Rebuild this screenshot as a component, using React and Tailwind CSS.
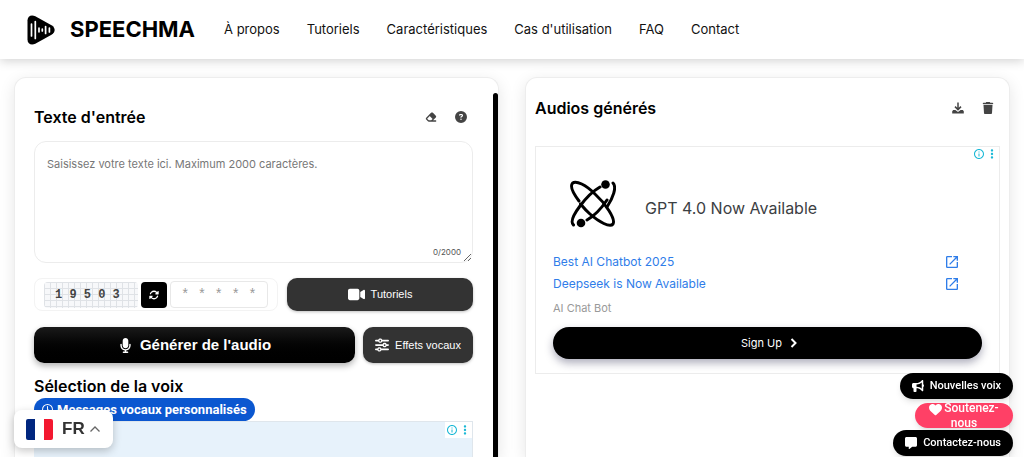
import React from "react";
import {
  FaEraser,
  FaCircleQuestion,
  FaRotate,
  FaVideo,
  FaMicrophone,
  FaSliders,
  FaBullhorn,
  FaHeart,
  FaMessage,
  FaTrash,
  FaRegClock,
} from "react-icons/fa6";
import { MdOpenInNew, MdInfoOutline, MdMoreVert } from "react-icons/md";

const navItems = ["À propos", "Tutoriels", "Caractéristiques", "Cas d'utilisation", "FAQ", "Contact"];

function Logo() {
  return (
    <svg viewBox="0 0 28 30" className="h-[30px] w-7" aria-hidden="true">
      <path
        d="M0.5 5.5C0.5 1 4.5-0.7 8.3 1.3L24.5 10.3C28.7 12.7 28.7 17.3 24.5 19.7L8.3 28.7C4.500 30.700 0.500 29 0.500 24.500Z"
        fill="#000"
      />
      <g stroke="#fff" strokeWidth="1.7" strokeLinecap="round">
        <path d="M4.5 9v12M8.3 6.5v17M12 13.2v3.6M15.3 14v2M18.6 11.5v7M22.4 13v4" />
      </g>
    </svg>
  );
}

function DownloadIcon() {
  return (
    <svg viewBox="0 0 12 12" className="size-3" aria-hidden="true">
      <path d="M6 0.5v6.8M3 4.6l3 3 3-3" fill="none" stroke="currentColor" strokeWidth="1.5" />
      <path d="M1.2 8h2.2L6 10l2.6-2h2.2l1 1.2v2.3H0.2V9.2Z" fill="currentColor" />
    </svg>
  );
}

function AtomIcon() {
  return (
    <svg viewBox="0 0 46 48" className="h-12 w-[46px]" fill="none" stroke="#000" strokeWidth="3" strokeLinecap="round" aria-hidden="true">
      <path d="M9 21C3 13 0 6 2.500 3.200C6 0 16 5 25 14C35 23 46 39 43 44C40 48 29 42 20 34C16 30.500 13 27 10.500 24" />
      <path d="M37 27C43 18 47 7 43 3M30 7C23 11 16 18 10 26C4 34 0 42 3.500 45M17 40C24 36 31 29 37 20" />
      <circle cx="35.500" cy="4.500" r="4.300" fill="#000" stroke="none" />
      <circle cx="11" cy="43" r="4.300" fill="#000" stroke="none" />
    </svg>
  );
}

function AdChoices({ className }) {
  return (
    <div className={"absolute top-0 right-0 flex items-center text-[#18b8d6] " + className}>
      <MdInfoOutline className="size-3" />
      <MdMoreVert className="size-[14px]" />
    </div>
  );
}

function InputPanel() {
  return (
    <section className="flex min-w-0 overflow-hidden rounded-t-xl border border-b-0 border-[#ededed] bg-white shadow-[0_4px_16px_rgba(0,0,0,0.1)]">
      <div className="min-w-0 flex-1 pt-[27px] pr-5 pl-[19px]">
        <div className="flex h-6 items-center justify-between pr-[6px]">
          <h2 className="text-[16px] font-semibold">Texte d'entrée</h2>
          <div className="flex gap-[18px] text-[#444]">
            <button type="button" aria-label="Effacer"><FaEraser className="size-3" /></button>
            <button type="button" aria-label="Aide"><FaCircleQuestion className="size-3" /></button>
          </div>
        </div>
        <div className="relative mt-3 flex">
          <textarea
            aria-label="Texte d'entrée"
            placeholder="Saisissez votre texte ici. Maximum 2000 caractères."
            className="h-[122px] w-full resize-y rounded-xl border border-[#ececec] px-3 py-3 text-[11px] leading-5 placeholder:text-[#777]"
          />
          <span className="absolute right-3 bottom-1 text-[8px] leading-[14px] text-[#555]">0/2000</span>
        </div>
        <div className="mt-[15px] flex gap-[9px]">
          <div className="flex h-[33px] w-[244px] items-center gap-[3px] rounded-lg border border-[#f3f3f3] px-[9px]">
            <div className="flex h-[26px] w-[94px] items-center rounded-sm bg-[#f7f8fa] bg-[linear-gradient(#dfe2e6_1px,transparent_1px),linear-gradient(90deg,#dfe2e6_1px,transparent_1px)] bg-[size:6px_6px] pl-[11px] font-['Liberation_Mono',monospace] text-[12px] font-bold text-[#444]">
              1 9 5 0 3
            </div>
            <button type="button" aria-label="Actualiser" className="flex size-[26px] items-center justify-center rounded bg-black text-white">
              <FaRotate className="size-[10px]" />
            </button>
            <input
              aria-label="Code de vérification"
              placeholder="* * * * *"
              className="h-[27px] w-0 min-w-0 flex-1 rounded border border-[#e8e8e8] px-[10px] font-['Liberation_Mono',monospace] text-[14px] placeholder:text-[#999]"
            />
          </div>
          <button type="button" className="flex h-[33px] flex-1 items-center justify-center gap-[6px] rounded-[10px] bg-[#333] font-['Liberation_Sans',sans-serif] text-[11px] text-white shadow-[0_1px_3px_rgba(0,0,0,0.25)]">
            <FaVideo className="size-[17px]" />
            Tutoriels
          </button>
        </div>
        <div className="mt-4 flex gap-2">
          <button type="button" className="flex h-9 flex-1 items-center justify-center gap-[7px] rounded-[10px] bg-linear-to-b from-[#1a1a1a] to-black font-['Liberation_Sans',sans-serif] text-[15px] font-bold text-white shadow-[0_3px_6px_rgba(0,0,0,0.3)]">
            <FaMicrophone className="size-[15px]" />
            Générer de l'audio
          </button>
          <button type="button" className="flex h-9 w-[110px] items-center justify-center gap-[6px] rounded-[10px] bg-[#333] font-['Liberation_Sans',sans-serif] text-[11px] text-white shadow-[0_1px_3px_rgba(0,0,0,0.25)]">
            <FaSliders className="size-[14px]" />
            Effets vocaux
          </button>
        </div>
        <h2 className="mt-[11px] text-[16px] leading-6 font-semibold">Sélection de la voix</h2>
        <a href="#voix" className="flex h-[23px] w-fit items-center gap-1 rounded-full bg-[#0b57d0] px-2 font-['Roboto',sans-serif] text-[13px] font-bold text-white">
          <FaRegClock className="size-[11px]" />
          Messages vocaux personnalisés
        </a>
        <div className="relative h-40 border-t border-r border-[#dfe6ec] bg-[#e7f2fb]">
          <AdChoices className="bg-white py-px pl-px" />
        </div>
      </div>
      <div className="mt-[15px] w-[5px] rounded-t bg-black" />
    </section>
  );
}

function AdLink({ children }) {
  return (
    <a href="#ad" className="flex h-[22px] items-center justify-between pr-[22px] text-[#2f7de9]">
      {children}
      <MdOpenInNew className="size-4" />
    </a>
  );
}

function AudioPanel() {
  return (
    <section className="min-w-0 rounded-t-xl border border-b-0 border-[#ededed] bg-white px-[9px] pt-[18px] shadow-[0_4px_16px_rgba(0,0,0,0.1)]">
      <div className="flex h-6 items-center justify-between pr-[6px]">
        <h2 className="text-[16px] font-semibold">Audios générés</h2>
        <div className="flex gap-[18px] text-[#444]">
          <button type="button" aria-label="Télécharger"><DownloadIcon /></button>
          <button type="button" aria-label="Supprimer"><FaTrash className="size-3" /></button>
        </div>
      </div>
      <div className="relative mt-[26px] h-[228px] border border-[#ececec] px-[17px] pt-[31px] text-[12px]">
        <AdChoices className="" />
        <div className="flex h-[52px] items-center gap-[29px] pl-[17px]">
          <AtomIcon />
          <p className="pt-2 text-[16px] text-[#3c4043]">GPT 4.0 Now Available</p>
        </div>
        <div className="mt-[21px]">
          <AdLink>Best AI Chatbot 2025</AdLink>
          <AdLink>Deepseek is Now Available</AdLink>
        </div>
        <p className="mt-[3px] text-[11px] leading-5 text-[#999]">AI Chat Bot</p>
        <button type="button" className="mt-[9px] flex h-8 w-full items-center justify-center gap-2 rounded-full bg-black pl-1 text-[11px] text-white shadow-[0_4px_8px_rgba(20,20,60,0.35)]">
          Sign Up
          <svg viewBox="0 0 8 10" className="h-[10px] w-2" fill="none" stroke="currentColor" strokeWidth="2" aria-hidden="true">
            <path d="M1.500 1l4 4-4 4" />
          </svg>
        </button>
      </div>
    </section>
  );
}

export default function App() {
  return (
    <div className="flex h-screen flex-col overflow-hidden bg-white font-['Inter',sans-serif] text-black">
      <header className="relative flex h-[59px] shrink-0 items-center bg-white pl-[27px] shadow-[0_2px_10px_rgba(0,0,0,0.18)]">
        <a href="#accueil" className="flex items-center gap-[15px] text-[22px] font-bold">
          <Logo />
          SPEECHMA
        </a>
        <nav className="ml-[29px] flex gap-[27px] text-[13px] text-[#111]">
          {navItems.map((item) => (
            <a key={item} href="#section">{item}</a>
          ))}
        </nav>
      </header>

      <main className="grid min-h-0 flex-1 grid-cols-2 gap-[26px] px-[14px] pt-[18px]">
        <InputPanel />
        <AudioPanel />
      </main>

      <button type="button" className="fixed bottom-[9px] left-[14px] flex h-[38px] w-[99px] items-center gap-[9px] rounded-lg bg-white pl-3 font-['Liberation_Sans',sans-serif] text-[17px] font-bold text-[#333] shadow-[0_3px_8px_rgba(0,0,0,0.22)]">
        <svg viewBox="0 0 27 21" className="h-[21px] w-[27px]" aria-hidden="true">
          <rect width="27" height="21" rx="2" fill="#fff" />
          <path d="M2 0H9V21H2Q0 21 0 19V2Q0 0 2 0Z" fill="#00267f" />
          <path d="M18 0H25Q27 0 27 2V19Q27 21 25 21H18Z" fill="#f31830" />
        </svg>
        <span className="flex items-center gap-[5px]">
          FR
          <svg viewBox="0 0 10 6" className="h-[6px] w-[10px]" fill="none" stroke="#666" strokeWidth="1.3" aria-hidden="true">
            <path d="M0.500 5.500L5 1l4.500 4.500" />
          </svg>
        </span>
      </button>

      <div className="fixed right-[11px] bottom-px flex flex-col items-end font-['Roboto',sans-serif] text-[11px] font-medium text-white">
        <a href="#nouvelles" className="flex h-[26px] items-center gap-[6px] rounded-full bg-black px-3 shadow-md">
          <FaBullhorn className="size-3" />
          Nouvelles voix
        </a>
        <a href="#soutien" className="mt-1 flex h-[25px] w-[98px] items-center justify-center overflow-hidden rounded-full bg-[#ff4066] px-2 text-center text-[12px] leading-[14px] shadow-md">
          <span>
            <FaHeart className="mr-[2px] inline size-[13px] align-middle" />
            Soutenez-<br />nous
          </span>
        </a>
        <a href="#contact" className="mt-[2px] flex h-[26px] items-center gap-[6px] rounded-full bg-black px-3 shadow-md">
          <FaMessage className="size-3" />
          Contactez-nous
        </a>
      </div>
    </div>
  );
}
